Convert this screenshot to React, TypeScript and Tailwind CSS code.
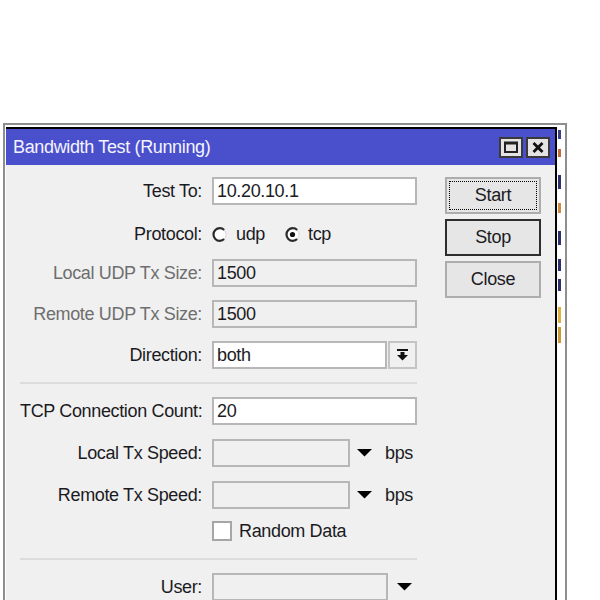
import React from 'react';

const text = 'text-[#1b1b1f]';

function Field({ w = 'w-[205px]', value = '', disabled = false }: { w?: string; value?: string; disabled?: boolean }) {
  return (
    <div
      className={`${w} h-[28px] border-2 border-[#b7b7b7] flex items-center pl-[3px] ${
        disabled ? 'bg-[#f0f0f0]' : 'bg-white'
      }`}
    >
      {value}
    </div>
  );
}

function Row({
  label,
  gray = false,
  className = '',
  children,
}: {
  label?: string;
  gray?: boolean;
  className?: string;
  children: React.ReactNode;
}) {
  return (
    <div className={`flex items-center h-[28px] ${className}`}>
      <div className={`w-[182px] text-right whitespace-nowrap ${gray ? 'text-[#6e6e6e]' : text}`}>{label}</div>
      <div className="ml-[10px] flex items-center">{children}</div>
    </div>
  );
}

function Triangle() {
  return (
    <svg width="15" height="8" viewBox="0 0 15 8">
      <polygon points="0,0 15,0 7.5,7.5" fill="#000" />
    </svg>
  );
}

function Radio({ checked }: { checked?: boolean }) {
  return (
    <svg width="15" height="15" viewBox="0 0 15 15">
      <circle cx="7.5" cy="7.5" r="6.3" fill="#fff" />
      <path d="M12.2 3 A6.3 6.3 0 1 0 12.2 12" fill="none" stroke="#2a2a2a" strokeWidth="2.2" />
      <path d="M12.2 3 A6.3 6.3 0 0 1 12.2 12" fill="none" stroke="#dedede" strokeWidth="1.2" />
      {checked && <circle cx="7.5" cy="7.5" r="2.6" fill="#111" />}
    </svg>
  );
}

function Separator({ className = '' }: { className?: string }) {
  return <div className={`w-[397px] h-[2px] bg-[#dcdcdc] ${className}`} />;
}

function Button({ label, variant }: { label: string; variant: 'focus' | 'default' | 'plain' }) {
  return (
    <div
      className={`w-[96px] h-[37px] border-2 bg-[#e6e6e6] flex items-center justify-center p-[2px] ${
        variant === 'default' ? 'border-[#2e2e2e]' : 'border-[#adadad]'
      }`}
    >
      <div
        className={`w-full h-full flex items-center justify-center ${
          variant === 'focus' ? 'border border-dotted border-black' : ''
        }`}
      >
        {label}
      </div>
    </div>
  );
}

export default function App() {
  return (
    <div
      className={`w-[600px] h-[600px] bg-white overflow-hidden pt-[123px] pl-[3px] font-['Liberation_Sans',Arial,sans-serif] text-[18px] tracking-[-0.35px] ${text}`}
    >
      <div className="w-[564px] h-[500px] border-t-2 border-l-2 border-r-2 border-[#8e8e8e] pt-[2px] pl-[1px] flex">
        {/* window */}
        <div className="w-[551px] h-full border-t-2 border-r-2 border-black flex flex-col">
          <div className="h-[36px] bg-[#4a4fcb] flex items-center justify-between pl-[7px] pr-[5px]">
            <span className="text-[#f4f4ff]">Bandwidth Test (Running)</span>
            <div className="flex gap-[3px]">
              <div className="w-[24px] h-[21px] border-2 border-[#3a3a3a] bg-[#e4e4e4] flex items-center justify-center">
                <svg width="14" height="12" viewBox="0 0 14 12">
                  <rect x="1" y="1.5" width="12" height="9.5" fill="none" stroke="#222" strokeWidth="2" />
                  <rect x="1" y="1" width="12" height="2.5" fill="#222" />
                </svg>
              </div>
              <div className="w-[24px] h-[21px] border-2 border-[#3a3a3a] bg-[#e4e4e4] flex items-center justify-center">
                <svg width="12" height="11" viewBox="0 0 12 11">
                  <path d="M1.5 1 L10.5 10 M10.5 1 L1.5 10" stroke="#111" strokeWidth="2.8" />
                </svg>
              </div>
            </div>
          </div>

          <div className="flex-1 bg-[#f0f0f0] flex pl-[14px]">
            {/* form */}
            <div className="flex flex-col pt-[12px] w-[397px]">
              <Row label="Test To:">
                <Field value="10.20.10.1" />
              </Row>
              <Row label="Protocol:" className="mt-[15px]">
                <div className="flex items-center">
                  <Radio />
                  <span className="ml-[9px]">udp</span>
                  <span className="ml-[20px] flex items-center">
                    <Radio checked />
                  </span>
                  <span className="ml-[8px]">tcp</span>
                </div>
              </Row>
              <Row label="Local UDP Tx Size:" gray className="mt-[11px]">
                <Field value="1500" disabled />
              </Row>
              <Row label="Remote UDP Tx Size:" gray className="mt-[13px]">
                <Field value="1500" disabled />
              </Row>
              <Row label="Direction:" className="mt-[13px]">
                <Field w="w-[175px]" value="both" />
                <div className="ml-[1px] w-[29px] h-[28px] border-2 border-[#c4c4c4] bg-[#f0f0f0] flex items-center justify-center">
                  <svg width="11" height="12" viewBox="0 0 11 12">
                    <rect x="0" y="0" width="11" height="2" fill="#111" />
                    <rect x="3.5" y="3" width="4" height="4" fill="#111" />
                    <polygon points="0,6 11,6 5.5,11.5" fill="#111" />
                  </svg>
                </div>
              </Row>
              <Separator className="mt-[13px]" />
              <Row label="TCP Connection Count:" className="mt-[13px]">
                <Field value="20" />
              </Row>
              <Row label="Local Tx Speed:" className="mt-[14px]">
                <Field w="w-[138px]" disabled />
                <span className="ml-[7px] flex items-center">
                  <Triangle />
                </span>
                <span className="ml-[13px]">bps</span>
              </Row>
              <Row label="Remote Tx Speed:" className="mt-[14px]">
                <Field w="w-[138px]" disabled />
                <span className="ml-[7px] flex items-center">
                  <Triangle />
                </span>
                <span className="ml-[13px]">bps</span>
              </Row>
              <div className="flex items-center h-[20px] mt-[12px] pl-[192px]">
                <div className="w-[20px] h-[20px] border-2 border-[#a6a6a6] bg-white" />
                <span className="ml-[7px]">Random Data</span>
              </div>
              <Separator className="mt-[17px]" />
              <Row label="User:" className="mt-[13px]">
                <Field w="w-[176px]" disabled />
                <span className="ml-[9px] flex items-center">
                  <Triangle />
                </span>
              </Row>
            </div>

            {/* buttons */}
            <div className="ml-[28px] pt-[12px] flex flex-col gap-[5px]">
              <Button label="Start" variant="focus" />
              <Button label="Stop" variant="default" />
              <Button label="Close" variant="plain" />
            </div>
          </div>
        </div>

        {/* bits of the window behind */}
        <div className="w-[4px] ml-[1px] flex flex-col">
          <div className="mt-[3px] h-[9px] w-[3px] bg-[#3b3f8a]" />
          <div className="mt-[10px] h-[8px] w-[3px] bg-[#c26a3a]" />
          <div className="mt-[18px] h-[14px] w-[3px] bg-[#2b2f6e]" />
          <div className="mt-[14px] h-[10px] w-[3px] bg-[#d08a45]" />
          <div className="mt-[18px] h-[14px] w-[3px] bg-[#2b2f6e]" />
          <div className="mt-[14px] h-[12px] w-[3px] bg-[#2b2f6e]" />
          <div className="mt-[8px] h-[12px] w-[3px] bg-[#2b2f6e]" />
          <div className="mt-[16px] h-[16px] w-[3px] bg-[#e0b040]" />
          <div className="mt-[4px] h-[16px] w-[3px] bg-[#c99a35]" />
        </div>
      </div>
    </div>
  );
}
